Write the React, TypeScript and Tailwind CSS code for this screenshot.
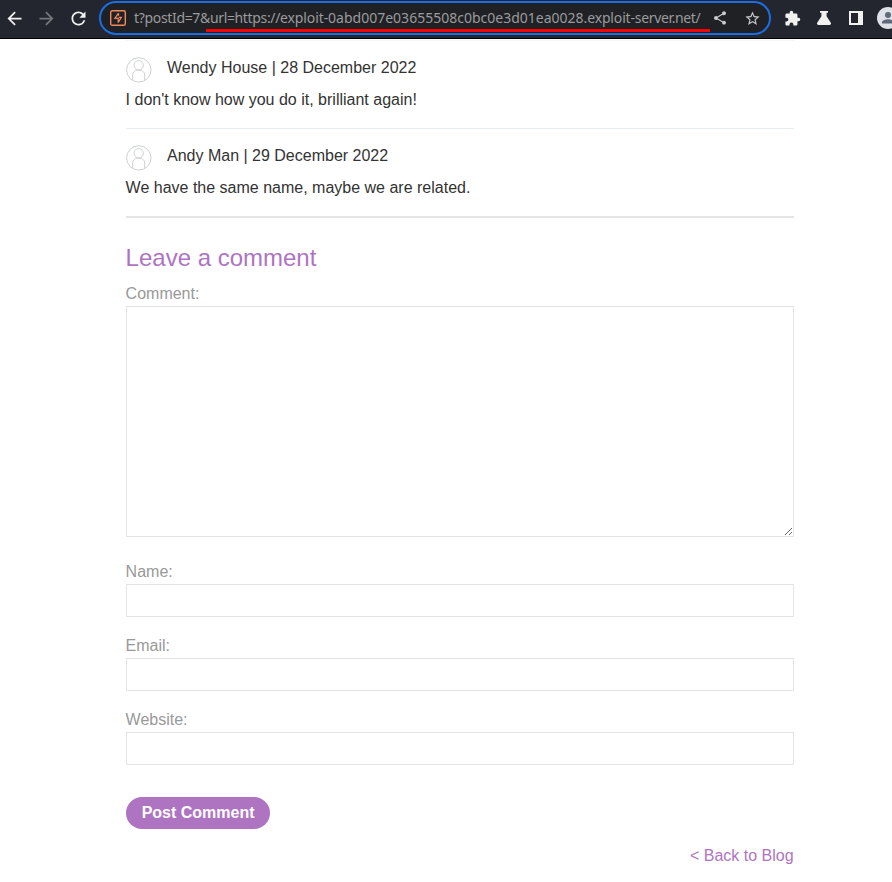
import React from "react";
import { MdArrowBack, MdArrowForward, MdRefresh, MdShare, MdStarBorder, MdExtension } from "react-icons/md";

function BurpIcon() {
  return (
    <svg className="ml-[9px] h-4 w-4 shrink-0" viewBox="0 0 16 16" fill="none" stroke="#f08a5d">
      <rect x="0.7" y="0.7" width="14.6" height="14.6" rx="1.6" strokeWidth="1.4" />
      <path d="M8.5 3.2 4.9 8.3h3.3v4.5M8.5 3.2v2.6M8.8 7.4h2.6L8.2 12.4" strokeWidth="1.2" />
    </svg>
  );
}

function Address() {
  return (
    <div className="relative ml-2 w-[577px] shrink-0 whitespace-nowrap font-['Noto_Sans',sans-serif] text-[14px] leading-5 text-[#9a9b9e]">
      <span className="tracking-[-0.33px]">t?postId=7</span>
      <span className="tracking-[-0.36px]">&amp;url=</span>
      <span className="tracking-[-0.35px]">https://</span>
      <span className="tracking-[-0.1px]">exploit-</span>
      <span>0abd007e03655508c0bc0e3d01ea0028</span>
      <span className="tracking-[-0.15px]">.exploit-</span>
      <span className="tracking-[-0.36px]">server.net/</span>
      <span className="absolute top-[21px] left-[72px] h-[3px] w-[504px] bg-[#ff0000]" />
    </div>
  );
}

function Toolbar() {
  return (
    <header className="flex h-[39px] w-full items-start overflow-hidden border-b border-black bg-[#23252f] text-[#f1f1ef]">
      <div className="flex h-9 w-7 shrink-0 items-center justify-center"><MdArrowBack size={21} /></div>
      <div className="flex h-9 w-9 shrink-0 items-center justify-center text-[#75767b]"><MdArrowForward size={21} /></div>
      <div className="flex h-9 w-7 shrink-0 items-center justify-center"><MdRefresh size={21} /></div>
      <div className="mt-px ml-[7px] flex h-[34px] w-[672px] shrink-0 items-center rounded-full border-2 border-[#1b6fe4] bg-[#202124]">
        <BurpIcon />
        <Address />
        <MdShare size={16} className="ml-[1px] shrink-0 text-[#c9cacc]" />
        <MdStarBorder size={17} className="ml-[15.5px] shrink-0 text-[#c9cacc]" />
      </div>
      <div className="ml-[5px] flex h-9 w-8 shrink-0 items-center justify-center"><MdExtension size={17} /></div>
      <div className="flex h-9 w-8 shrink-0 items-center justify-center">
        <svg width="14" height="14" viewBox="0 0 14 14" fill="currentColor">
          <path d="M3 0h8v1.7H9.6v3.6l4.2 6.5c.6 1-.1 2.2-1.2 2.2H1.4C.3 14-.4 12.8.2 11.8l4.2-6.5V1.7H3z" />
        </svg>
      </div>
      <div className="flex h-9 w-8 shrink-0 items-center justify-center">
        <svg width="14" height="14" viewBox="0 0 14 14" fill="currentColor">
          <path fillRule="evenodd" d="M0 0h14v14H0zM2 2v10h7V2z" />
        </svg>
      </div>
      <div className="flex h-9 w-8 shrink-0 items-center justify-center">
        <svg width="22" height="22" viewBox="0 0 22 22">
          <circle cx="11" cy="11" r="11" fill="#dee1e6" />
          <circle cx="11" cy="8" r="3" fill="#5f6979" />
          <path d="M5 16.5v-1.3c0-2 4-3 6-3s6 1 6 3v1.3z" fill="#5f6979" />
        </svg>
      </div>
    </header>
  );
}

function Avatar() {
  return (
    <svg className="mt-[0.5px] h-[26px] w-[26px]" viewBox="0 0 26 26" fill="none" stroke="#c8cccc" strokeWidth="0.9">
      <circle cx="12.8" cy="12.9" r="12.2" />
      <circle cx="12.7" cy="8.3" r="4.7" />
      <path d="M6.7 23.5V18c0-3 2.6-5 6-5s6 2 6 5v5.5" />
    </svg>
  );
}

function Comment({ author, body }: { author: string; body: string }) {
  return (
    <section>
      <div className="flex h-8 items-start">
        <Avatar />
        <span className="ml-[15.4px] leading-6">{author}</span>
      </div>
      <p className="leading-6">{body}</p>
    </section>
  );
}

function Field({ label }: { label: string }) {
  return (
    <label className="mb-[17px] block text-[#999]">
      <span className="block h-6 leading-6">{label}</span>
      <input className="block h-[33px] w-full border border-[#e4e4e4] bg-white px-2 outline-none" />
    </label>
  );
}

export default function App() {
  return (
    <div className="h-[882px] w-full overflow-hidden bg-white font-['Liberation_Sans',Arial,sans-serif] text-base text-[#333332]">
      <Toolbar />
      <main className="ml-[125.6px] w-[668px]">
        <div className="mt-px h-px bg-[#f4f5f7]" />
        <div className="pt-[15px]">
          <Comment author="Wendy House | 28 December 2022" body="I don't know how you do it, brilliant again!" />
        </div>
        <hr className="mt-4 mb-[15px] border-t border-[#e8eef0]" />
        <Comment author="Andy Man | 29 December 2022" body="We have the same name, maybe we are related." />
        <hr className="mt-4 border-t-2 border-[#e4e4e4]" />
        <form>
          <h2 className="mt-6 h-8 text-2xl leading-8 text-[#ae74c2]">Leave a comment</h2>
          <label className="mt-2 block text-[#999]">
            <span className="block h-6 leading-6">Comment:</span>
            <textarea className="block h-[231px] w-full resize border border-[#e4e4e4] bg-white outline-none" />
          </label>
          <div className="mt-[23px]">
            <Field label="Name:" />
            <Field label="Email:" />
            <Field label="Website:" />
          </div>
          <button type="button" className="mt-8 block h-8 w-36 rounded-full bg-[#ae74c2] pl-px text-base leading-8 font-bold text-white">Post Comment</button>
        </form>
        <div className="mt-[15px] text-right leading-6 text-[#ae74c2]"><a>&lt; Back to Blog</a></div>
      </main>
    </div>
  );
}
